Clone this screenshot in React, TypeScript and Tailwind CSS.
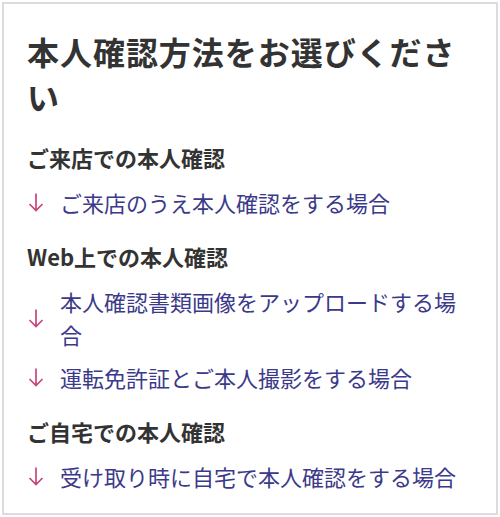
const sections = [
  {
    title: 'ご来店での本人確認',
    links: ['ご来店のうえ本人確認をする場合'],
  },
  {
    title: 'Web上での本人確認',
    links: ['本人確認書類画像をアップロードする場合', '運転免許証とご本人撮影をする場合'],
  },
  {
    title: 'ご自宅での本人確認',
    links: ['受け取り時に自宅で本人確認をする場合'],
  },
];

const ArrowDown = () => (
  <svg width="16" height="20" viewBox="0 0 16 20" fill="none" className="shrink-0">
    <path d="M8 1.5V18.5M1.5 12L8 18.5L14.5 12" stroke="#c8457c" strokeWidth="1.7" />
  </svg>
);

export default function App() {
  return (
    <div className="w-[500px] h-[517px] p-[2px] bg-white font-['Noto_Sans_CJK_JP',sans-serif]">
      <div className="h-[513px] border-2 border-[#dcdcdc] bg-white pl-[23px] pr-[26px] pt-[25px] pb-[19px]">
        <h1 className="text-[32px] leading-[1.4] font-bold tracking-[0.03em] text-[#333333]">
          本人確認方法をお選びください
        </h1>
        <div className="mt-[22px] flex flex-col gap-[21px]">
          {sections.map((s) => (
            <div key={s.title}>
              <h2 className="text-[22px] leading-[1.5] font-bold text-[#333333]">{s.title}</h2>
              <ul className="mt-3 flex flex-col gap-[10px]">
                {s.links.map((l) => (
                  <li key={l} className="flex items-center gap-4 pl-[1px]">
                    <ArrowDown />
                    <a className="text-[22px] leading-[1.5] text-[#3b3a8a]">{l}</a>
                  </li>
                ))}
              </ul>
            </div>
          ))}
        </div>
      </div>
    </div>
  );
}
